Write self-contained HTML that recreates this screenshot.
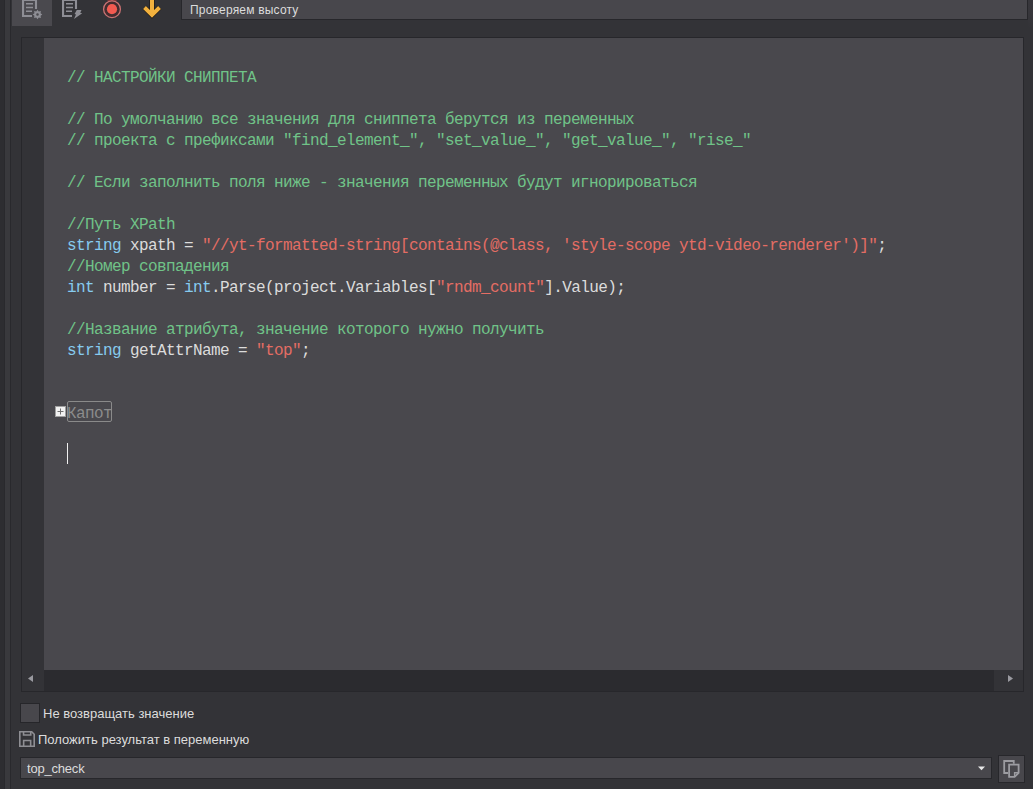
<!DOCTYPE html>
<html>
<head>
<meta charset="utf-8">
<style>
html,body{margin:0;padding:0;}
body{width:1033px;height:789px;overflow:hidden;background:#333337;position:relative;font-family:"Liberation Sans",sans-serif;}
.abs{position:absolute;}
#s0{left:0;top:0;width:4px;height:789px;background:#2d2d31;}
#s1{left:4px;top:0;width:1px;height:789px;background:#29292d;}
#s2{left:5px;top:0;width:5px;height:789px;background:#39393d;}
#s3{left:10px;top:0;width:1px;height:789px;background:#29292d;}
#rs{left:1028px;top:0;width:5px;height:30px;background:linear-gradient(#38373c 0,#37363b 14px,#333337 28px);}
#btn1{left:12px;top:0;width:40px;height:26px;background:#4a494e;}
#inp{left:181px;top:-1px;width:845px;height:19px;background:#48474c;border:1px solid #27272b;}
#inp span{position:absolute;left:8px;top:3px;font-size:12px;letter-spacing:0.2px;color:#dcdcdc;white-space:nowrap;}
#ed{left:21px;top:37px;width:1001px;height:653px;border:1px solid #27272b;background:#49484d;}
#gut{left:22px;top:38px;width:22px;height:632px;background:#333337;}
#track{left:22px;top:670px;width:1001px;height:21px;background:#2b2b2f;}
#sbl{left:22px;top:670px;width:22px;height:21px;background:#333337;}
#sbr{left:994px;top:670px;width:29px;height:21px;background:#333337;}
#code{left:67px;top:68px;font-family:"Liberation Mono",monospace;font-size:16px;letter-spacing:-0.6px;line-height:21px;color:#dcdcdc;}
#code div{height:21px;white-space:pre;}
.c{color:#70c388;}
.k{color:#86cbef;}
.s{color:#e46d64;}
.g{color:#8c8c8c;}
#cb{left:20px;top:703px;width:18px;height:18px;border:1px solid #26262a;background:#48474c;}
.lbl{font-size:13px;color:#dcdcdc;white-space:nowrap;}
#combo{left:20px;top:757px;width:970px;height:20px;border:1px solid #27272b;background:#48474c;}
#combo span{position:absolute;left:6px;top:3px;font-size:13px;letter-spacing:-0.2px;color:#dcdcdc;}
#copy{left:998px;top:755px;width:25px;height:26px;border:1px solid #27272b;background:#48474c;}
</style>
</head>
<body>
<div class="abs" id="s0"></div><div class="abs" id="s1"></div><div class="abs" id="s2"></div><div class="abs" id="s3"></div>
<div class="abs" id="rs"></div>
<div class="abs" id="btn1"></div>
<!-- toolbar icons -->
<svg class="abs" style="left:0;top:0" width="180" height="30" viewBox="0 0 180 30">
  <g fill="none" stroke="#8e8e95" stroke-width="2.1">
    <path d="M23.05 -2 V15.95 H32"/>
    <path d="M23 0 H36 V9"/>
    <path d="M63.05 -2 V15.95 H72"/>
    <path d="M63 0 H76 V9"/>
  </g>
  <g stroke="#8e8e95" stroke-width="1.5">
    <path d="M26 3.75 H33 M26 7.45 H33 M26 11.15 H32"/>
    <path d="M66 3.75 H73 M66 7.45 H73 M66 11.15 H72"/>
  </g>
  <path fill-rule="evenodd" fill="#8e8e95" d="M37.50 9.70 L38.76 11.45 L40.89 11.11 L40.55 13.24 L42.30 14.50 L40.55 15.76 L40.89 17.89 L38.76 17.55 L37.50 19.30 L36.24 17.55 L34.11 17.89 L34.45 15.76 L32.70 14.50 L34.45 13.24 L34.11 11.11 L36.24 11.45 Z M38.8 14.5 A1.3 1.3 0 1 0 36.2 14.5 A1.3 1.3 0 1 0 38.8 14.5 Z"/>
  <path d="M76.8 10 H81.5 L80.2 12.7 L82.2 13.2 L74 19 L76 14.4 L74.6 14 Z" fill="#8e8e95"/>
  <rect x="107.5" y="-1" width="9" height="1.8" fill="#93383a"/>
  <circle cx="112" cy="9.2" r="6.6" fill="none" stroke="#4a2a2c" stroke-width="1.5"/>
  <circle cx="112" cy="9.2" r="8.4" fill="none" stroke="#cc7272" stroke-width="1.3"/>
  <circle cx="112" cy="9.2" r="5.1" fill="#f35a50"/>
  <g fill="none" stroke="#1e1810" stroke-width="5.2" stroke-linejoin="miter">
    <path d="M152 -1 V15"/>
    <path d="M144.5 7.5 L152 15 L159.5 7.5"/>
  </g>
  <g fill="none" stroke="#f2b13e" stroke-width="4" stroke-linejoin="miter">
    <path d="M152 -1 V15"/>
    <path d="M144.5 7.5 L152 15 L159.5 7.5"/>
  </g>
</svg>
<div class="abs" id="inp"><span>Проверяем высоту</span></div>

<div class="abs" id="ed"></div>
<div class="abs" id="gut"></div>
<div class="abs" id="track"></div>
<div class="abs" id="sbl"></div>
<div class="abs" id="sbr"></div>
<svg class="abs" style="left:0;top:660px" width="1033" height="40">
  <path d="M28 18.5 L33 15 L33 22 Z" fill="#9a9aa0"/>
  <path d="M1013 18.5 L1008 15 L1008 22 Z" fill="#9a9aa0"/>
</svg>

<div class="abs" id="code"><div><span class="c">// НАСТРОЙКИ СНИППЕТА</span></div>
<div></div>
<div><span class="c">// По умолчанию все значения для сниппета берутся из переменных</span></div>
<div><span class="c">// проекта с префиксами "find_element_", "set_value_", "get_value_", "rise_"</span></div>
<div></div>
<div><span class="c">// Если заполнить поля ниже - значения переменных будут игнорироваться</span></div>
<div></div>
<div><span class="c">//Путь XPath</span></div>
<div><span class="k">string</span> xpath = <span class="s">"//yt-formatted-string[contains(@class, 'style-scope ytd-video-renderer')]"</span>;</div>
<div><span class="c">//Номер совпадения</span></div>
<div><span class="k">int</span> number = <span class="k">int</span>.Parse(project.Variables[<span class="s">"rndm_count"</span>].Value);</div>
<div></div>
<div><span class="c">//Название атрибута, значение которого нужно получить</span></div>
<div><span class="k">string</span> getAttrName = <span class="s">"top"</span>;</div>
<div></div>
<div></div>
<div><span class="g">Капот</span></div>
</div>
<!-- collapsed region -->
<div class="abs" style="left:67px;top:401px;width:43px;height:19px;border:1px solid #8a8a8a;border-radius:2px;"></div>
<div class="abs" style="left:55px;top:406px;width:9px;height:9px;border:1px solid #a0a0a0;background:#f2f2f2;"></div>
<svg class="abs" style="left:55px;top:406px" width="11" height="11"><path d="M2.5 5.5 H8.5 M5.5 2.5 V8.5" stroke="#707070" stroke-width="1"/></svg>
<div class="abs" style="left:67px;top:443px;width:1px;height:21px;background:#f0f0f0;"></div>

<div class="abs" id="cb"></div>
<div class="abs lbl" style="left:43px;top:706px;">Не возвращать значение</div>
<svg class="abs" style="left:19px;top:731px" width="17" height="17" viewBox="0 0 17 17">
  <g fill="none" stroke="#8e8e93" stroke-width="1.6">
  <path d="M0.8 0.8 H12.7 L15.2 3.3 V15.2 H0.8 Z"/>
  <path d="M4.55 0.8 V4.05 H11.75 V0.8"/>
  <path d="M4.65 15.2 V9.55 H11.65 V15.2"/>
  </g>
</svg>
<div class="abs lbl" style="left:38px;top:732px;">Положить результат в переменную</div>
<div class="abs" id="combo"><span>top_check</span></div>
<svg class="abs" style="left:970px;top:760px" width="20" height="16"><path d="M8 6.5 H15 L11.5 10.2 Z" fill="#e8e8e8"/></svg>
<div class="abs" id="copy"></div>
<svg class="abs" style="left:998px;top:755px" width="27" height="28" viewBox="0 0 27 28">
  <g fill="none" stroke="#9c9ca1" stroke-width="1.8">
  <path d="M15.75 8.7 V6 H6.2 V18 H10.2"/>
  <path d="M11.1 9.6 H20.6 V17.8 L16.6 21.8 H11.1 Z"/>
  <path d="M16.6 21.8 V17.8 H20.6" stroke-width="1.4"/>
  </g>
</svg>
</body>
</html>
